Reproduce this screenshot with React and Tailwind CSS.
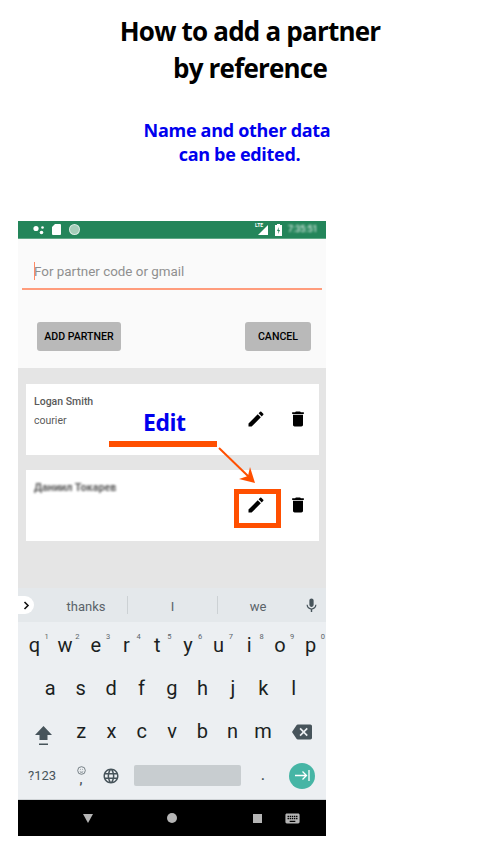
import { MdEdit, MdDelete, MdMic, MdLanguage, MdBackspace, MdKeyboard } from 'react-icons/md';

const ROW_1 = [['q', '1'], ['w', '2'], ['e', '3'], ['r', '4'], ['t', '5'], ['y', '6'], ['u', '7'], ['i', '8'], ['o', '9'], ['p', '0']];
const ROW_2 = ['a', 's', 'd', 'f', 'g', 'h', 'j', 'k', 'l'];
const ROW_3 = ['z', 'x', 'c', 'v', 'b', 'n', 'm'];

const StatusBar = () => (
  <div className="h-[18px] bg-[#23855a] border-b border-[#5fa886] flex items-center pl-[15px] pr-[13px] text-white">
    <svg width="12" height="10" viewBox="0 0 12 10" className="fill-white">
      <circle cx="3" cy="3.5" r="2.6" />
      <circle cx="9.500" cy="2.500" r="1.300" />
      <circle cx="8.500" cy="7.500" r="1.800" />
    </svg>
    <svg width="9" height="11" viewBox="0 0 9 11" className="ml-[7px] fill-white">
      <path d="M3 0h5a1 1 0 0 1 1 1v9a1 1 0 0 1-1 1H1a1 1 0 0 1-1-1V3z" />
    </svg>
    <div className="w-[11px] h-[11px] ml-[8px] rounded-full bg-[#a5cdb9] border border-white/60" />
    <div className="ml-auto flex items-center">
      <div className="relative w-[13px] h-[11px]">
        <span className="absolute left-0 -top-[2px] text-[5px] leading-[7px] font-bold font-['Roboto',sans-serif]">LTE</span>
        <svg width="13" height="11" viewBox="0 0 13 11" className="fill-white">
          <path d="M13 1v10H3z" />
        </svg>
      </div>
      <svg width="7" height="12" viewBox="0 0 7 12" className="ml-[7px]">
        <path className="fill-white" d="M2 0h3v1h2v11H0V1h2z" />
        <path className="fill-[#23855a]" d="M4 3 2 7h1.400L3 10l2-4H3.600z" />
      </svg>
      <span className="ml-[6px] w-[25px] text-[9px] leading-none text-white font-['Roboto',sans-serif] blur-[0.9px]">7:35:51</span>
    </div>
  </div>
);

const PartnerCard = ({ children, boxed }) => (
  <div className="relative h-[71px] bg-white flex">
    <div className="flex-1 pl-[8px] pt-[12px] font-['Roboto',sans-serif] text-[#5a5a5a]">{children}</div>
    <div className="w-[83px] flex pt-[25px] pl-[10px] gap-[21.5px] text-black">
      <MdEdit className="w-[20px] h-[20px]" />
      <MdDelete className="w-[20px] h-[20px]" />
    </div>
    {boxed && <div className="absolute left-[208px] top-[19px] w-[47px] h-[39px] border-[5px] border-[#ff4f00]" />}
  </div>
);

const App = () => (
  <div className="w-[500px] h-[850px] bg-white overflow-hidden">
    <div className="h-[221px] pt-[13px] font-['Open_Sans',sans-serif] font-bold text-center">
      <h1 className="text-[26px] leading-[37px] text-black tracking-[-0.8px]">
        How to add a partner
        <br />
        by reference
      </h1>
      <div className="mt-[31px] ml-[-26px] text-[18px] leading-[24px] text-[#0000ee] tracking-[-0.3px]">
        Name and other data
        <br />
        <span className="ml-[5px]">can be edited.</span>
      </div>
    </div>

    <div className="relative ml-[18px] w-[308px]">
      <StatusBar />

      {/* form */}
      <div className="h-[129px] bg-[#fafafa] pt-[23px] px-[4px]">
        <div className="pb-[7px] border-b-2 border-[#ff9c7c]">
          <div className="relative h-[19px] flex items-center pl-[12px] pt-[1px] font-['Roboto',sans-serif] text-[13.4px] text-[#8f8f8f]">
            <span className="absolute left-[12px] top-0 w-px h-[18px] bg-[#ff8a65]" />
            For partner code or gmail
          </div>
        </div>
        <div className="flex justify-between pl-[15px] pr-[11px] mt-[32px]">
          <div className="w-[84px] h-[29px] pt-[1px] rounded-[3px] bg-[#b9b9b9] flex items-center justify-center font-['Roboto',sans-serif] font-medium text-[10.6px] text-black">ADD PARTNER</div>
          <div className="w-[66px] h-[29px] pt-[1px] rounded-[3px] bg-[#b9b9b9] flex items-center justify-center font-['Roboto',sans-serif] font-medium text-[10.6px] text-black">CANCEL</div>
        </div>
      </div>

      {/* partner list */}
      <div className="h-[220px] bg-[#e5e5e5] pt-[16px] pl-[8px] pr-[7px] flex flex-col gap-[15px]">
        <PartnerCard>
          <div className="text-[10.5px] leading-[12px] font-medium">Logan Smith</div>
          <div className="text-[10.5px] leading-[12px] mt-[7px]">courier</div>
        </PartnerCard>
        <PartnerCard boxed>
          <div className="text-[10.8px] leading-[12px] font-bold blur-[0.8px]">Даниил Токарев</div>
        </PartnerCard>
      </div>

      {/* suggestions */}
      <div className="h-[34px] bg-[#e4e8eb] flex items-center font-['Roboto',sans-serif] text-[13px] text-[#5a6369]">
        <div className="w-[16px] h-[18px] bg-white rounded-r-full flex items-center justify-center">
          <svg width="7" height="9" viewBox="0 0 7 9" fill="none" stroke="#111" strokeWidth="1.6"><path d="M1.500 1 5 4.500 1.500 8" /></svg>
        </div>
        <span className="w-[93px] pl-[11px] pt-[3px] text-center">thanks</span>
        <span className="w-px h-[18px] bg-[#ccd1d4]" />
        <span className="w-[89px] pt-[3px] text-center">I</span>
        <span className="w-px h-[18px] bg-[#ccd1d4]" />
        <span className="w-[80px] pt-[3px] text-center">we</span>
        <MdMic className="w-[17px] h-[17px] ml-[5px] text-[#47545b]" />
      </div>

      {/* keyboard */}
      <div className="h-[178px] bg-[#eceff2] font-['Roboto',sans-serif] text-[20px] leading-none text-[#1b1f22] border-b border-[#cfd3d6]">
        <div className="flex h-[46px] pt-[13px] pl-[1px]">
          {ROW_1.map(([k, n]) => (
            <div key={k} className="relative flex-1 text-center">
              {k}
              <span className="absolute right-[1px] -top-[2px] text-[7.5px] text-[#5a6369]">{n}</span>
            </div>
          ))}
        </div>
        <div className="flex h-[43px] pt-[10px] px-[17px]">
          {ROW_2.map((k) => <div key={k} className="flex-1 text-center">{k}</div>)}
        </div>
        <div className="flex h-[43px] pt-[10px] pl-[48px] relative">
          <svg width="19" height="21" viewBox="0 0 19 21" className="absolute left-[16px] top-[14px] fill-[#47545b]">
            <path d="M9.500 1 18 10h-4.500v5h-8v-5H1z" />
            <path d="M5 18.500h9V20H5z" />
          </svg>
          {ROW_3.map((k) => <div key={k} className="w-[30.3px] text-center">{k}</div>)}
          <MdBackspace className="absolute left-[274px] top-[11px] w-[20px] h-[20px] text-[#47545b]" />
        </div>
        <div className="flex items-center h-[43px] pl-[10px] pr-[11px]">
          <span className="w-[38px] text-[13px] text-[#47545b]">?123</span>
          <div className="w-[22px] flex flex-col items-center text-[#47545b] ml-[4px]">
            <svg width="9" height="9" viewBox="0 0 9 9" fill="none" stroke="#47545b" strokeWidth="0.7">
              <circle cx="4.500" cy="4.500" r="3.800" />
              <path d="M2.800 5.500c.9 1 2.500 1 3.400 0M3 3.400h.6M5.400 3.400H6" />
            </svg>
            <span className="text-[12px] leading-[10px] font-bold">,</span>
          </div>
          <MdLanguage className="w-[18px] h-[18px] ml-[10px] text-[#47545b]" />
          <div className="w-[107px] h-[21px] ml-[14px] -mt-[1px] rounded-[2px] bg-[#c8cdd0]" />
          <span className="ml-[20px] w-[6px] text-[13px] text-[#47545b] font-bold">.</span>
          <div className="ml-auto w-[26px] h-[26px] rounded-full bg-[#46b5a5] flex items-center justify-center">
            <svg width="15" height="11" viewBox="0 0 15 11" fill="none" stroke="white" strokeWidth="1.300"><path d="M0 5.500h11M7.500 1.500l4 4-4 4M14 0v11" /></svg>
          </div>
        </div>
      </div>

      {/* nav bar */}
      <div className="h-[36px] bg-black flex items-center relative">
        <svg width="10" height="9" viewBox="0 0 10 9" className="ml-[65px] fill-[#b5b5b5]"><path d="M0 0h10L5 9z" /></svg>
        <div className="w-[10px] h-[10px] rounded-full bg-[#b5b5b5] ml-[74px]" />
        <div className="w-[9px] h-[9px] bg-[#b5b5b5] ml-[76px]" />
        <MdKeyboard className="w-[17px] h-[17px] ml-[22px] text-[#b5b5b5]" />
      </div>

      {/* annotations */}
      <span className="absolute left-[125px] top-[186px] font-['Open_Sans',sans-serif] font-bold text-[23px] leading-[30px] text-[#0000ee] tracking-[-0.5px]">Edit</span>
      <div className="absolute left-[91px] top-[220px] w-[108px] h-[6px] bg-[#ff4f00]" />
      <svg width="44" height="40" viewBox="0 0 44 40" className="absolute left-[198px] top-[224px]">
        <path d="M3 3 33 32" stroke="#ff4f00" strokeWidth="2" fill="none" />
        <path d="M39 38 23 34 32 31 34 22z" fill="#ff4f00" />
      </svg>
    </div>
  </div>
);

export default App;
